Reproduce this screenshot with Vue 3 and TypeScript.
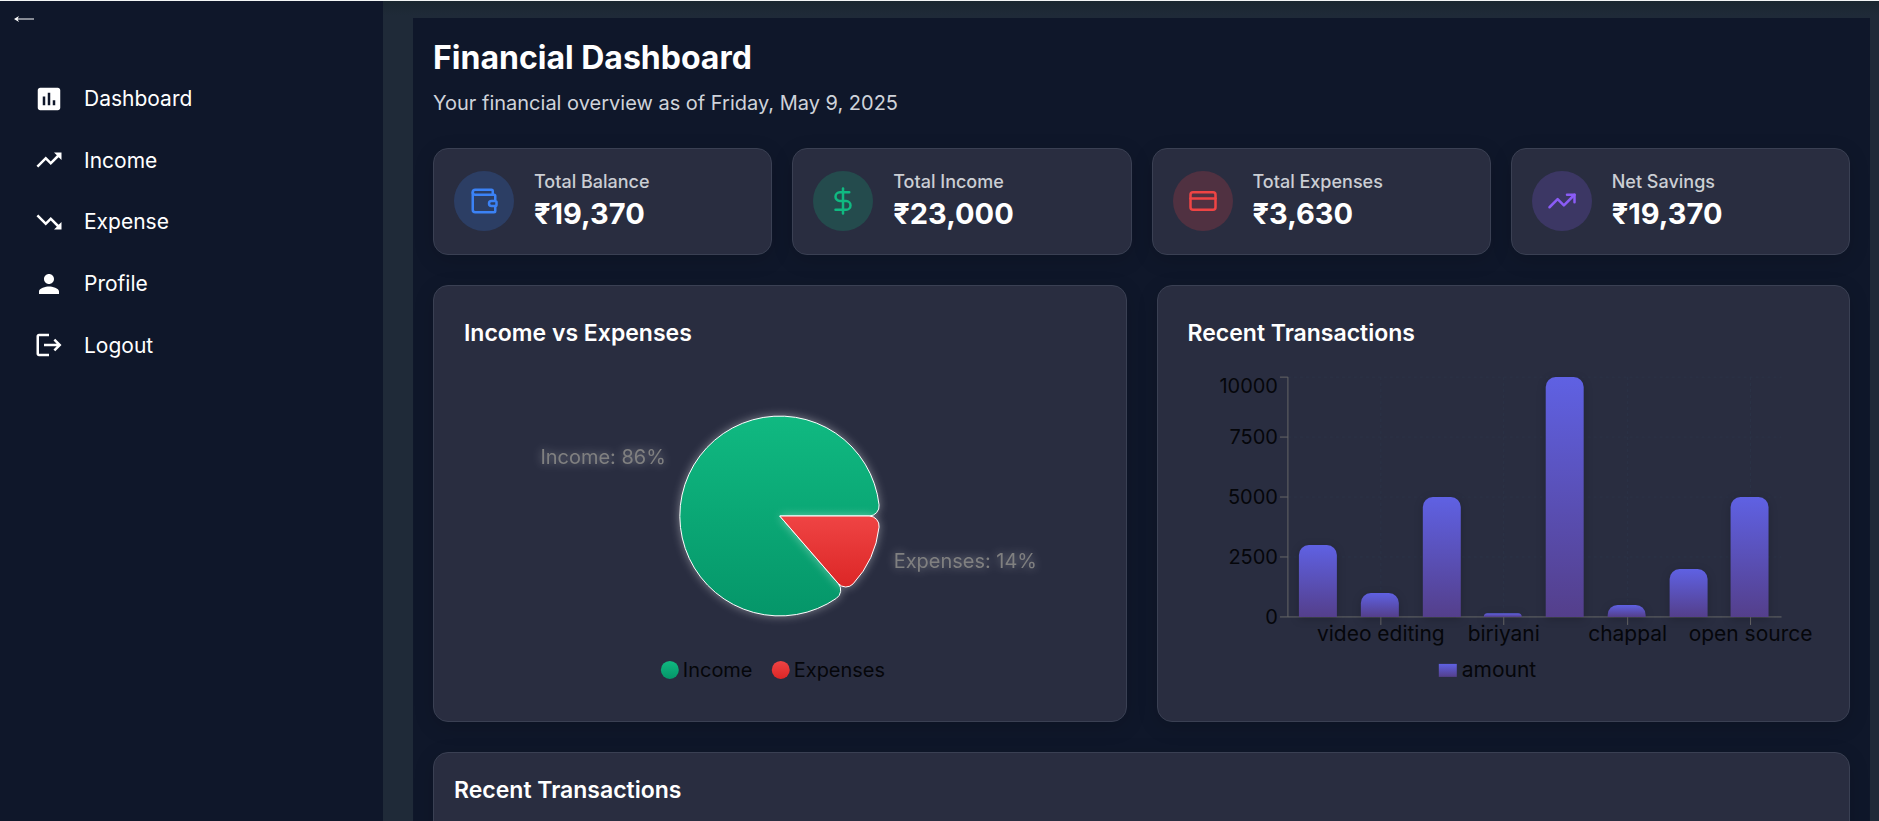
<script setup lang="ts">
interface NavItem { label: string; path: string }
interface Stat { label: string; value: string; tone: string; icon: string[] }

const navItems: NavItem[] = [
  { label: 'Dashboard', path: 'M19 3H5c-1.1 0-2 .9-2 2v14c0 1.1.9 2 2 2h14c1.1 0 2-.9 2-2V5c0-1.1-.9-2-2-2zM9 17H7v-7h2v7zm4 0h-2V7h2v10zm4 0h-2v-4h2v4z' },
  { label: 'Income', path: 'M16 6l2.29 2.29-4.88 4.88-4-4L2 16.59 3.41 18l6-6 4 4 6.3-6.29L22 12V6z' },
  { label: 'Expense', path: 'M16 18l2.29-2.29-4.88-4.88-4 4L2 7.41 3.41 6l6 6 4-4 6.3 6.29L22 12v6z' },
  { label: 'Profile', path: 'M12 12c2.21 0 4-1.79 4-4s-1.79-4-4-4-4 1.79-4 4 1.79 4 4 4zm0 2c-2.67 0-8 1.34-8 4v2h16v-2c0-2.66-5.33-4-8-4z' },
  { label: 'Logout', path: 'M17 7l-1.41 1.41L18.17 11H8v2h10.17l-2.58 2.58L17 17l5-5zM4 5h8V3H4c-1.1 0-2 .9-2 2v14c0 1.1.9 2 2 2h8v-2H4V5z' },
]

const stats: Stat[] = [
  { label: 'Total Balance', value: '₹19,370', tone: 'blue', icon: ['M19 7V4a1 1 0 0 0-1-1H5a2 2 0 0 0 0 4h15a1 1 0 0 1 1 1v4h-3a2 2 0 0 0 0 4h3a1 1 0 0 0 1-1v-2a1 1 0 0 0-1-1', 'M3 5v14a2 2 0 0 0 2 2h15a1 1 0 0 0 1-1v-4'] },
  { label: 'Total Income', value: '₹23,000', tone: 'green', icon: ['M12 2v20', 'M17 5H9.5a3.5 3.5 0 0 0 0 7h5a3.5 3.5 0 0 1 0 7H6'] },
  { label: 'Total Expenses', value: '₹3,630', tone: 'red', icon: ['M4 5h16a2 2 0 0 1 2 2v10a2 2 0 0 1-2 2H4a2 2 0 0 1-2-2V7a2 2 0 0 1 2-2z', 'M2 10h20'] },
  { label: 'Net Savings', value: '₹19,370', tone: 'purple', icon: ['M22 7l-8.5 8.5-5-5L2 17', 'M16 7h6v6'] },
]

const income = 23000
const expenses = 3630
const pie = { cx: 316, cy: 145, r: 100, corner: 10 }

function point(radius: number, degrees: number): string {
  const a = (degrees * Math.PI) / 180
  return `${(pie.cx + radius * Math.cos(a)).toFixed(2)} ${(pie.cy - radius * Math.sin(a)).toFixed(2)}`
}

// A wedge whose two outer corners are rounded; angles run counter-clockwise.
function wedge(start: number, end: number): string {
  const inner = pie.r - pie.corner
  const inset = (Math.asin(pie.corner / inner) * 180) / Math.PI
  const side = Math.sqrt(inner * inner - pie.corner * pie.corner)
  const c = pie.corner
  const large = end - start - 2 * inset > 180 ? 1 : 0
  return `M${pie.cx} ${pie.cy}L${point(side, start)}A${c} ${c} 0 0 0 ${point(pie.r, start + inset)}`
    + `A${pie.r} ${pie.r} 0 ${large} 0 ${point(pie.r, end - inset)}A${c} ${c} 0 0 0 ${point(side, end)}Z`
}

const split = (income / (income + expenses)) * 360
const incomeWedge = wedge(0, split)
const expenseWedge = wedge(split, 360)

const plot = { left: 100, right: 594, top: 6, bottom: 246, barWidth: 38 }
const amounts = [3000, 1000, 5000, 150, 10000, 500, 2000, 5000]
const names = ['', 'video editing', '', 'biriyani', '', 'chappal', '', 'open source']
const band = (plot.right - plot.left) / amounts.length

const bars = amounts.map((amount, i) => {
  const h = (amount / 10000) * (plot.bottom - plot.top)
  const x = Math.round(plot.left + band * i + band * 0.18)
  const r = Math.min(10, h)
  const y = plot.bottom - h
  return `M${x} ${plot.bottom}V${y + r}a${r} ${r} 0 0 1 ${r} ${-r}h${plot.barWidth - 2 * r}a${r} ${r} 0 0 1 ${r} ${r}V${plot.bottom}Z`
})
const xTicks = names
  .map((name, i) => ({ name, x: Math.round(plot.left + band * (i + 0.5)) }))
  .filter((tick) => tick.name)
const yTicks = [0, 2500, 5000, 7500, 10000].map((value) => {
  const y = plot.bottom - (value / 10000) * (plot.bottom - plot.top)
  return { value, y, baseline: value === 10000 ? y + 16 : y + 7 }
})
</script>

<template>
  <div class="app">
    <aside class="sidebar">
      <button class="back" type="button" aria-label="Collapse menu">
        <svg viewBox="0 0 20 10" aria-hidden="true">
          <path d="M3 5h17" />
          <path d="M0 5L5 2L3.500 5L5 8Z" class="tip" />
        </svg>
      </button>
      <nav class="nav">
        <a v-for="item in navItems" :key="item.label" class="nav-link" href="#">
          <svg viewBox="0 0 24 24" aria-hidden="true"><path :d="item.path" /></svg>
          <span>{{ item.label }}</span>
        </a>
      </nav>
    </aside>

    <main class="main">
      <header class="header">
        <h1>Financial Dashboard</h1>
        <p>Your financial overview as of Friday, May 9, 2025</p>
      </header>

      <section class="stats">
        <article v-for="stat in stats" :key="stat.label" class="card stat">
          <span class="badge" :class="stat.tone">
            <svg viewBox="0 0 24 24" aria-hidden="true"><path v-for="d in stat.icon" :key="d" :d="d" /></svg>
          </span>
          <div class="stat-text">
            <h3>{{ stat.label }}</h3>
            <p>{{ stat.value }}</p>
          </div>
        </article>
      </section>

      <section class="charts">
        <article class="card chart">
          <h2>Income vs Expenses</h2>
          <svg class="plot" viewBox="0 0 632 320" role="img" aria-label="Income vs Expenses">
            <defs>
              <linearGradient id="incomeFill" x1="0" y1="0" x2="0" y2="1">
                <stop offset="0" stop-color="#10b981" /><stop offset="1" stop-color="#059669" />
              </linearGradient>
              <linearGradient id="expenseFill" x1="0" y1="0" x2="0" y2="1">
                <stop offset="0" stop-color="#ef4444" /><stop offset="1" stop-color="#dc2626" />
              </linearGradient>
            </defs>
            <g class="glow"><path :d="incomeWedge" fill="url(#incomeFill)" stroke="#fff" /></g>
            <g class="glow"><path :d="expenseWedge" fill="url(#expenseFill)" stroke="#fff" /></g>
            <text class="glow slice" x="202" y="93" text-anchor="end">Income: 86%</text>
            <text class="glow slice" x="430" y="197">Expenses: 14%</text>
            <circle cx="206" cy="299" r="9" fill="url(#incomeFill)" />
            <text x="219" y="306">Income</text>
            <circle cx="317" cy="299" r="9" fill="url(#expenseFill)" />
            <text x="330" y="306">Expenses</text>
          </svg>
        </article>

        <article class="card chart">
          <h2>Recent Transactions</h2>
          <svg class="plot" viewBox="0 0 632 320" role="img" aria-label="Recent Transactions">
            <defs>
              <linearGradient id="barFill" x1="0" y1="0" x2="0" y2="1">
                <stop offset="0" stop-color="#5f61e3" /><stop offset="1" stop-color="#543f8b" />
              </linearGradient>
            </defs>
            <g class="grid">
              <path v-for="t in yTicks" :key="t.value" :d="`M${plot.left} ${t.y}H${plot.right}`" />
              <path v-for="t in xTicks" :key="t.name" :d="`M${t.x} ${plot.top}V${plot.bottom}`" />
            </g>
            <g class="axis">
              <path :d="`M${plot.left} ${plot.top}V${plot.bottom}H${plot.right}`" />
              <path v-for="t in yTicks" :key="t.value" :d="`M${plot.left - 8} ${t.y}h8`" />
              <path v-for="t in xTicks" :key="t.name" :d="`M${t.x} ${plot.bottom}v8`" />
            </g>
            <g class="bars"><path v-for="(d, i) in bars" :key="i" :d="d" fill="url(#barFill)" /></g>
            <text v-for="t in yTicks" :key="t.value" :x="plot.left - 10" :y="t.baseline" text-anchor="end">{{ t.value }}</text>
            <text v-for="t in xTicks" :key="t.name" class="name" :x="t.x" :y="plot.bottom + 24" text-anchor="middle">{{ t.name }}</text>
            <rect x="251" y="293" width="18" height="13" fill="url(#barFill)" />
            <text class="name" x="274" y="306">amount</text>
          </svg>
        </article>
      </section>

      <section class="card recent">
        <h2>Recent Transactions</h2>
      </section>
    </main>
  </div>
</template>

<style>
body {
  margin: 0;
  background: #1f2937;
}
</style>

<style scoped>
.app {
  display: flex;
  height: 100vh;
  overflow: hidden;
  box-sizing: border-box;
  border-top: 1px solid #f3f6f6;
  background: linear-gradient(#1a2730, #1f2a38 14px);
  color: #fff;
  font-family: Inter, "Noto Sans", sans-serif;
  font-size: 20px;
}
.sidebar {
  flex: 0 0 383px;
  background: #0f172a;
}
.back {
  display: flex;
  align-items: center;
  height: 36px;
  margin: 0 0 0 14px;
  padding: 0;
  border: 0;
  background: none;
  cursor: pointer;
}
.back svg {
  width: 20px;
  height: 10px;
  fill: none;
  stroke: #fff;
}
.back .tip {
  fill: #fff;
  stroke: none;
}
.nav {
  display: grid;
  grid-auto-rows: 1fr;
  height: 308px;
  margin-top: 31px;
}
.nav-link {
  display: flex;
  align-items: center;
  gap: 20px;
  padding-left: 34px;
  color: #fff;
  font-size: 21px;
  text-decoration: none;
}
.nav-link svg {
  width: 30px;
  height: 30px;
  fill: #fff;
}
.main {
  flex: 1;
  min-width: 0;
  margin: 17px 9px 0 30px;
  padding: 20px 20px 0;
  background: #0f172a;
}
h1,
h2,
h3,
p {
  margin: 0;
}
.header {
  margin-bottom: 30px;
}
.header h1 {
  font-size: 32px;
  line-height: 40px;
  font-weight: 700;
}
.header p {
  margin-top: 10px;
  line-height: 30px;
  color: #cfd3da;
}
.card {
  box-sizing: border-box;
  border: 1px solid #3a4053;
  border-radius: 15px;
  background: #292d40;
  box-shadow: 0 5px 20px rgba(0, 0, 0, 0.15);
}
.stats {
  display: grid;
  grid-template-columns: repeat(4, 1fr);
  gap: 20px;
  margin-bottom: 30px;
}
.stat {
  display: flex;
  align-items: center;
  gap: 20px;
  height: 107px;
  padding: 0 20px 2px;
}
.badge {
  display: flex;
  align-items: center;
  justify-content: center;
  flex: 0 0 60px;
  height: 60px;
  border-radius: 50%;
}
.badge svg {
  width: 30px;
  height: 30px;
  fill: none;
  stroke: currentColor;
  stroke-width: 2;
  stroke-linecap: round;
  stroke-linejoin: round;
}
.blue { background: #2c3e64; color: #3b82f6; }
.green { background: #244b4d; color: #10b981; }
.red { background: #503141; color: #ef4444; }
.purple { background: #3c3764; color: #8b5cf6; }
.stat h3 {
  font-size: 18px;
  line-height: 26px;
  font-weight: 500;
  color: #cbced4;
}
.stat p {
  font-size: 29px;
  line-height: 38px;
  font-weight: 700;
}
.charts {
  display: grid;
  grid-template-columns: repeat(2, 1fr);
  gap: 30px;
  margin-bottom: 30px;
}
.chart {
  height: 437px;
  padding: 30px 30px 0;
}
h2 {
  font-size: 23px;
  line-height: 34px;
  font-weight: 600;
}
.plot {
  display: block;
  width: 100%;
  height: 320px;
  margin-top: 21px;
  overflow: visible;
}
.plot text {
  font-size: 20px;
  fill: #05060a;
}
.plot .slice {
  fill: #808080;
}
.plot .name {
  font-size: 21px;
}
.glow {
  filter: drop-shadow(0 0 5px rgba(255, 255, 255, 0.4));
}
.axis path {
  fill: none;
  stroke: #666;
}
.grid path {
  fill: none;
  stroke: #2b3346;
  stroke-dasharray: 3 3;
}
.bars {
  filter: drop-shadow(0 2px 4px rgba(0, 0, 0, 0.2));
}
.recent {
  height: 300px;
  padding: 20px;
}
</style>
